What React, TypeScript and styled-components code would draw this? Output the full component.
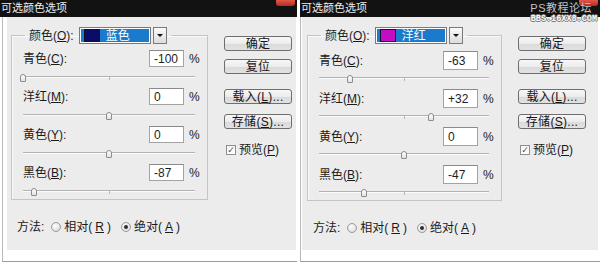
import React from 'react'
import styled, { createGlobalStyle } from 'styled-components'

const GlobalStyle = createGlobalStyle`
  html, body {
    margin: 0;
    padding: 0;
    background: #fff;
  }
  body {
    font-family: "Liberation Sans", "Noto Sans CJK SC", sans-serif;
    color: #1a1a1a;
  }
`

type Channel = { name: string; key: string; value: number; text: string }

type DialogData = {
  colorName: string
  swatch: string
  channels: Channel[]
  width: number
  frameLeft: number
  frameRight: number
  panelLeft: number
  groupWidth: number
  inputH: number
  watermark?: boolean
}

const dialogs: DialogData[] = [
  {
    colorName: '蓝色',
    swatch: '#0b0c66',
    channels: [
      { name: '青色', key: 'C', value: -100, text: '-100' },
      { name: '洋红', key: 'M', value: 0, text: '0' },
      { name: '黄色', key: 'Y', value: 0, text: '0' },
      { name: '黑色', key: 'B', value: -87, text: '-87' },
    ],
    width: 297,
    frameLeft: 2,
    frameRight: 1,
    panelLeft: 4,
    groupWidth: 197,
    inputH: 17,
  },
  {
    colorName: '洋红',
    swatch: '#c40cc4',
    channels: [
      { name: '青色', key: 'C', value: -63, text: '-63' },
      { name: '洋红', key: 'M', value: 32, text: '+32' },
      { name: '黄色', key: 'Y', value: 0, text: '0' },
      { name: '黑色', key: 'B', value: -47, text: '-47' },
    ],
    width: 300,
    frameLeft: 0,
    frameRight: 2,
    panelLeft: 5,
    groupWidth: 195,
    inputH: 19,
    watermark: true,
  },
]

function Key({ children }: { children: string }) {
  return <U>{children}</U>
}

function Dialog({ data }: { data: DialogData }) {
  return (
    <DialogBox $width={data.width}>
      <TitleBar>
        <span>可选颜色选项</span>
        <CloseButton />
      </TitleBar>
      <Frame $left={data.frameLeft} $right={data.frameRight}>
        <Panel $left={data.panelLeft}>
          <TopArea $groupWidth={data.groupWidth}>
            <Group>
              <Legend>
                <span>
                  颜色(<Key>O</Key>):
                </span>
                <ColorSelect>
                  <Selected>
                    <Swatch $color={data.swatch} />
                    {data.colorName}
                  </Selected>
                </ColorSelect>
                <DropButton>
                  <Arrow />
                </DropButton>
              </Legend>
              <Rows $pad={data.inputH === 17 ? 6 : 7}>
                {data.channels.map((c) => (
                  <React.Fragment key={c.key}>
                    <Row $h={data.inputH}>
                      <span>
                        {c.name}(<Key>{c.key}</Key>):
                      </span>
                      <ValueInput $h={data.inputH} value={c.text} readOnly />
                      <Pct>%</Pct>
                    </Row>
                    <Slider $h={38 - data.inputH} $line={26 - data.inputH}>
                      <Track />
                      <Tick />
                      <Thumb style={{ left: `${((c.value + 100) / 200) * 100}%` }} />
                    </Slider>
                  </React.Fragment>
                ))}
              </Rows>
            </Group>
            <Buttons>
              <Button>确定</Button>
              <Button $gap={8}>复位</Button>
              <Button $gap={15}>
                载入(<Key>L</Key>)...
              </Button>
              <Button $gap={10}>
                存储(<Key>S</Key>)...
              </Button>
              <Preview>
                <CheckBox>✓</CheckBox>
                <span>
                  预览(<Key>P</Key>)
                </span>
              </Preview>
            </Buttons>
          </TopArea>
          <MethodRow>
            <span>方法:</span>
            <Choice>
              <Radio />
              相对(<Key>R</Key>)
            </Choice>
            <Choice>
              <Radio $checked />
              绝对(<Key>A</Key>)
            </Choice>
          </MethodRow>
        </Panel>
      </Frame>
      {data.watermark && (
        <Watermark>
          <WatermarkTitle>PS教程论坛</WatermarkTitle>
          <WatermarkUrl>BBS.16XX8.COM</WatermarkUrl>
        </Watermark>
      )}
    </DialogBox>
  )
}

export default function App() {
  return (
    <>
      <GlobalStyle />
      <Page>
        {dialogs.map((d, i) => (
          <Dialog key={i} data={d} />
        ))}
      </Page>
    </>
  )
}

const Page = styled.div`
  width: 600px;
  height: 263px;
  display: flex;
  justify-content: space-between;
  background: #fff;
  overflow: hidden;
`

const DialogBox = styled.div<{ $width: number }>`
  position: relative;
  width: ${(p) => p.$width}px;
  height: 263px;
  display: flex;
  flex-direction: column;
`

const TitleBar = styled.div`
  height: 17px;
  flex: none;
  background: #121212;
  color: #ededed;
  font-size: 11px;
  line-height: 16px;
  padding-left: 1px;
  display: flex;
  justify-content: space-between;
  align-items: flex-start;
  white-space: nowrap;
`

const CloseButton = styled.div`
  width: 19px;
  height: 6px;
  margin-right: 2px;
  border-radius: 0 0 3px 3px;
  background: linear-gradient(#e0574a, #b8281e);
`

const Frame = styled.div<{ $left: number; $right: number }>`
  flex: 1;
  min-height: 0;
  display: flex;
  flex-direction: column;
  margin-left: ${(p) => p.$left}px;
  margin-bottom: 1px;
  padding: 0 ${(p) => p.$right}px 11px ${(p) => (p.$left ? 4 : 1)}px;
  border-left: 1px solid #b9b9b9;
  border-bottom: 1px solid #9c9c9c;
  background: #fff;
`

const Panel = styled.div<{ $left: number }>`
  flex: 1;
  min-height: 0;
  background: #ececec;
  padding-left: ${(p) => p.$left}px;
  font-size: 12px;
  line-height: 16px;
`

const TopArea = styled.div<{ $groupWidth: number }>`
  display: grid;
  grid-template-columns: ${(p) => p.$groupWidth}px 68px;
  column-gap: 16px;
  align-items: start;
`

const Group = styled.fieldset`
  margin: 10px 0 0;
  padding: 0 0 0 11px;
  border: 1px solid #c4c4c4;
  box-shadow: inset 1px 1px 0 #fafafa;
  min-width: 0;
`

const Legend = styled.legend`
  display: flex;
  align-items: center;
  height: 17px;
  padding: 0 4px;
  margin-left: 2px;
  font-size: 12px;
`

const U = styled.span`
  text-decoration: underline;
`

const ColorSelect = styled.div`
  width: 72px;
  height: 17px;
  box-sizing: border-box;
  margin-left: 5px;
  border: 1px solid #7a7a7a;
  background: #fff;
  padding: 1px;
`

const Selected = styled.div`
  height: 100%;
  display: flex;
  align-items: center;
  gap: 6px;
  padding-left: 3px;
  background: #1a7bcc;
  color: #fff;
  font-size: 12px;
`

const Swatch = styled.span<{ $color: string }>`
  width: 14px;
  height: 11px;
  background: ${(p) => p.$color};
  border: 1px solid #101030;
`

const DropButton = styled.div`
  width: 14px;
  height: 17px;
  box-sizing: border-box;
  margin-left: 2px;
  border: 1px solid #7a7a7a;
  background: linear-gradient(#fafafa, #dcdcdc);
  display: flex;
  align-items: center;
  justify-content: center;
`

const Arrow = styled.span`
  width: 0;
  height: 0;
  border-left: 3px solid transparent;
  border-right: 3px solid transparent;
  border-top: 3px solid #111;
`

const Rows = styled.div<{ $pad: number }>`
  padding-top: ${(p) => p.$pad}px;
`

const Row = styled.div<{ $h: number }>`
  display: grid;
  grid-template-columns: 1fr 35px 23px;
  align-items: center;
  height: ${(p) => p.$h}px;
  font-size: 12px;
`

const ValueInput = styled.input<{ $h: number }>`
  width: 35px;
  height: ${(p) => p.$h}px;
  box-sizing: border-box;
  margin: 0;
  padding: 0 0 0 4px;
  border: 1px solid #a3a3a3;
  border-top-color: #8a8a8a;
  background: #fff;
  color: #1e1e1e;
  font: 12px "Liberation Sans", Arial, sans-serif;
  outline: none;
`

const Pct = styled.span`
  padding-left: 5px;
  font: 12px "Liberation Sans", Arial, sans-serif;
`

const Slider = styled.div<{ $h: number; $line: number }>`
  position: relative;
  box-sizing: border-box;
  height: ${(p) => p.$h}px;
  padding-top: ${(p) => p.$line}px;
  margin-right: 12px;
  --line: ${(p) => p.$line}px;

  &:last-child {
    height: ${(p) => p.$h - 3}px;
  }
`

const Track = styled.div`
  height: 1px;
  background: #b2b2b2;
  box-shadow: 0 1px 0 #fbfbfb;
`

const Tick = styled.div`
  position: absolute;
  left: 50%;
  top: calc(var(--line) + 1px);
  width: 1px;
  height: 3px;
  background: #b8b8b8;
`

const Thumb = styled.div`
  position: absolute;
  top: calc(var(--line) - 2px);
  width: 6px;
  height: 8px;
  margin-left: -3px;
  box-sizing: border-box;
  border: 1px solid #8c8c8c;
  border-radius: 3px 3px 1px 1px;
  background: linear-gradient(#ffffff, #e2e2e2);
`

const Buttons = styled.div`
  display: flex;
  flex-direction: column;
  margin-top: 19px;
`

const Button = styled.button<{ $gap?: number }>`
  height: 15px;
  margin: ${(p) => p.$gap ?? 0}px 0 0;
  padding: 0;
  border: 1px solid #6e6e6e;
  border-radius: 3px;
  background: linear-gradient(#f7f7f7 0%, #ececec 50%, #dadada 51%, #e2e2e2 100%);
  color: #151515;
  font: 12px "Liberation Sans", "Noto Sans CJK SC", sans-serif;
  line-height: 12px;
  letter-spacing: 0.3px;
`

const Preview = styled.label`
  display: flex;
  align-items: center;
  gap: 3px;
  margin-top: 13px;
  padding-left: 2px;
  font-size: 12px;
`

const CheckBox = styled.span`
  width: 10px;
  height: 10px;
  box-sizing: border-box;
  border: 1px solid #8e8e8e;
  background: linear-gradient(#f4f4f4, #ffffff);
  color: #555;
  font: bold 9px "DejaVu Sans", sans-serif;
  line-height: 8px;
  text-align: center;
`

const MethodRow = styled.div`
  display: flex;
  align-items: center;
  height: 16px;
  margin-top: 19px;
  padding-left: 6px;
  font-size: 12px;
`

const Choice = styled.span`
  display: flex;
  align-items: center;
  gap: 3px;
  margin-left: 7px;

  & + & {
    margin-left: 10px;
  }
`

const Radio = styled.span<{ $checked?: boolean }>`
  position: relative;
  width: 10px;
  height: 10px;
  box-sizing: border-box;
  border-radius: 50%;
  border: 1px solid #9a9a9a;
  background: radial-gradient(circle at 40% 35%, #fdfdfd, #d4d4d4);

  &::after {
    content: '';
    display: ${(p) => (p.$checked ? 'block' : 'none')};
    position: absolute;
    left: 2px;
    top: 2px;
    width: 4px;
    height: 4px;
    border-radius: 50%;
    background: #2e2e2e;
  }
`

const Watermark = styled.div`
  position: absolute;
  top: 2px;
  right: 3px;
  display: flex;
  flex-direction: column;
  align-items: flex-end;
`

const WatermarkTitle = styled.span`
  font-size: 11px;
  line-height: 13px;
  color: #c4c4c4;
  margin-right: 5px;
  letter-spacing: 0.5px;
`

const WatermarkUrl = styled.span`
  font: bold 8.5px "Liberation Mono", monospace;
  line-height: 9px;
  color: #fbfbfb;
  text-shadow: 1px 0 0 #7c7c7c, -1px 0 0 #7c7c7c, 0 1px 0 #7c7c7c, 0 -1px 0 #7c7c7c;
`
